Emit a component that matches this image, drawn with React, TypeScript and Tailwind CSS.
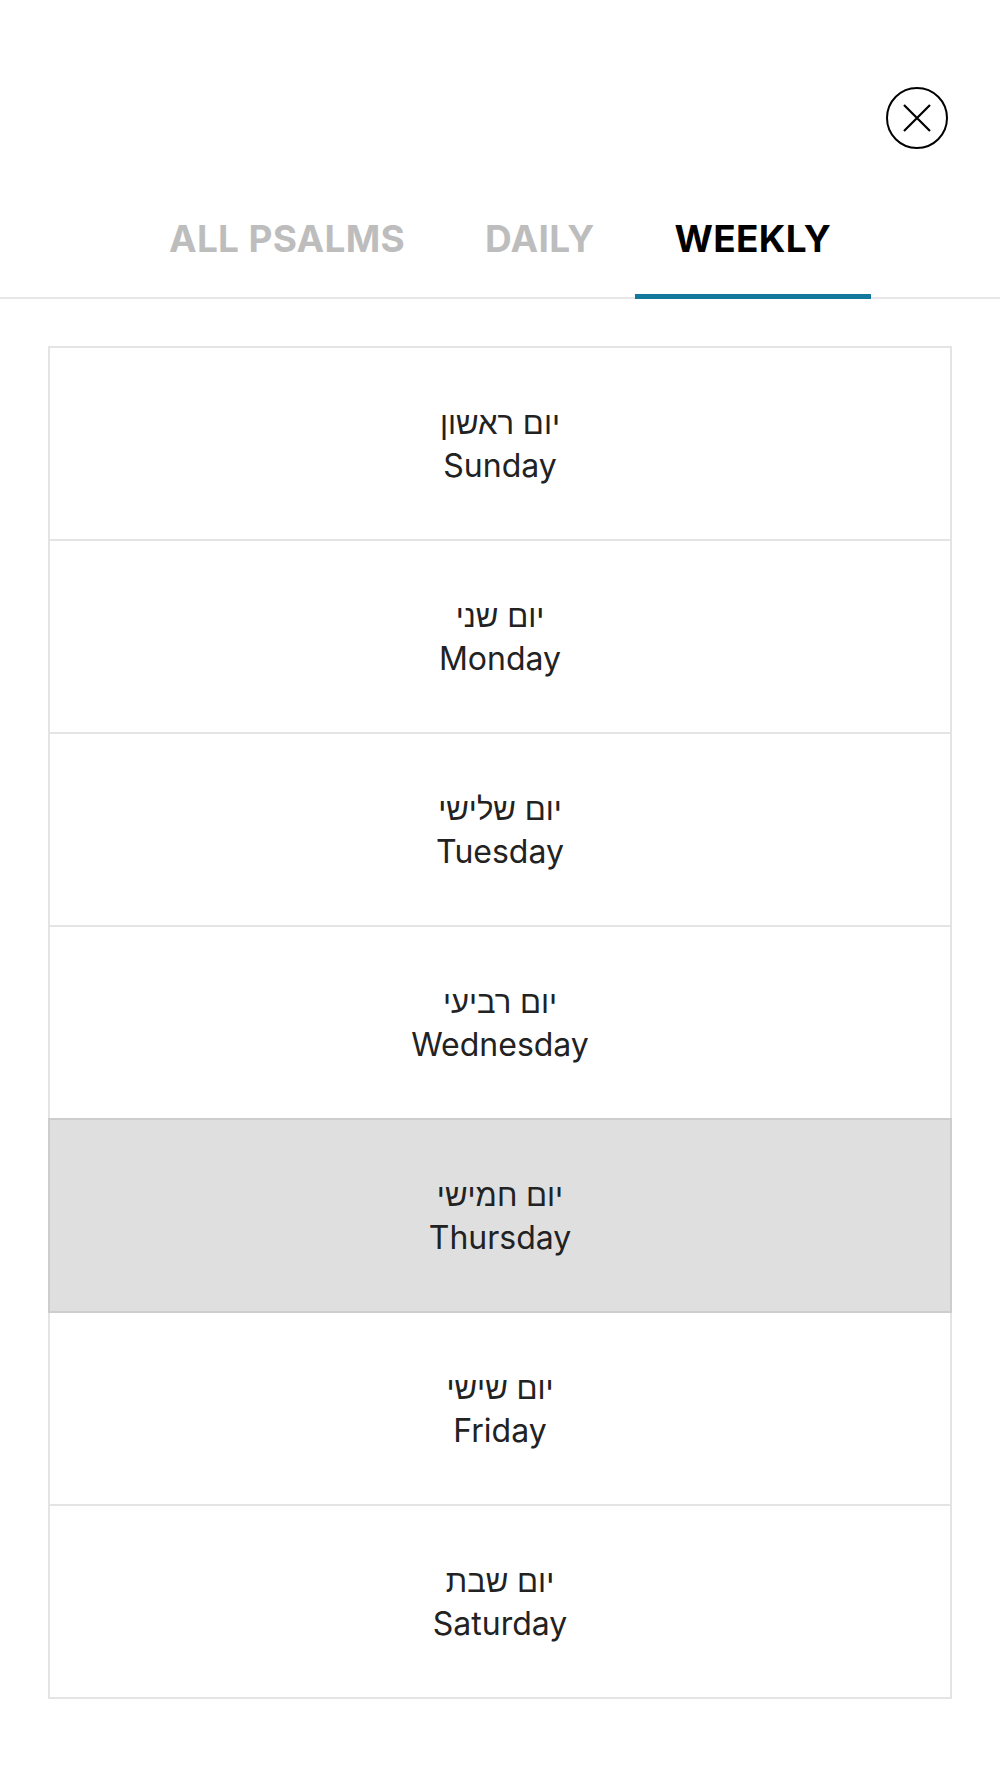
import { useState } from 'react'

const DAYS = [
  { he: 'יום ראשון', en: 'Sunday' },
  { he: 'יום שני', en: 'Monday' },
  { he: 'יום שלישי', en: 'Tuesday' },
  { he: 'יום רביעי', en: 'Wednesday' },
  { he: 'יום חמישי', en: 'Thursday' },
  { he: 'יום שישי', en: 'Friday' },
  { he: 'יום שבת', en: 'Saturday' },
]

const TABS = ['ALL PSALMS', 'DAILY', 'WEEKLY']

export default function App() {
  const [tab, setTab] = useState('WEEKLY')
  const [selected, setSelected] = useState('Thursday')

  return (
    <div className="min-h-[1778px] bg-white font-['Inter','Noto_Sans',sans-serif] text-[#222]">
      {/* Close */}
      <div className="flex justify-end pt-[87px] pr-[52px]">
        <button className="w-[62px] h-[62px] rounded-full border-[2.5px] border-black flex items-center justify-center">
          <svg width="30" height="30" viewBox="0 0 30 30" fill="none" stroke="black" strokeWidth="2.2">
            <path d="M2 2 L28 28 M28 2 L2 28" />
          </svg>
        </button>
      </div>

      {/* Tabs */}
      <div className="flex justify-center border-b-2 border-[#e6e6e6]">
        {TABS.map((t) => (
          <button
            key={t}
            onClick={() => setTab(t)}
            className={`px-[40px] pt-[66px] pb-[31px] text-[37px] leading-[48px] font-bold tracking-[0.3px] border-b-[5px] -mb-[2px] ${
              tab === t ? 'text-black border-[#12799d]' : 'text-[#bdbdbd] border-transparent'
            }`}
          >
            {t}
          </button>
        ))}
      </div>

      {/* Days */}
      <div className="mx-[48px] mt-[47px] flex flex-col">
        {DAYS.map((d, i) => (
          <button
            key={d.en}
            onClick={() => setSelected(d.en)}
            className={`h-[195px] border-2 flex flex-col items-center justify-center text-[32px] leading-[43px] ${
              i > 0 ? '-mt-[2px]' : ''
            } ${
              selected === d.en
                ? 'relative z-10 bg-[#dfdfdf] border-[#cdcdcd]'
                : 'bg-white border-[#e4e4e4]'
            }`}
          >
            <span dir="rtl" className="text-[31px]">{d.he}</span>
            <span>{d.en}</span>
          </button>
        ))}
      </div>
    </div>
  )
}
